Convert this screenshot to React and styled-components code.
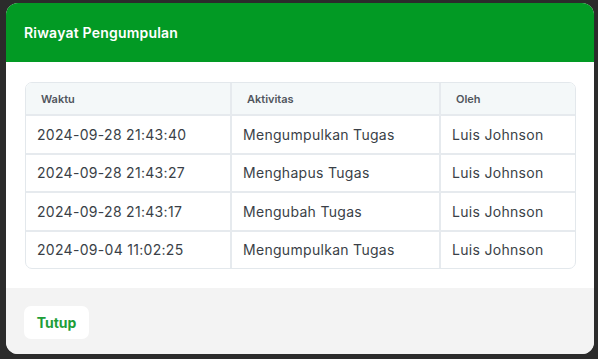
import React from "react";
import styled, { createGlobalStyle } from "styled-components";

const Global = createGlobalStyle`
  html, body {
    margin: 0;
    padding: 0;
    background: #2b2b2b;
    font-family: Inter, "Noto Sans", sans-serif;
  }
`;

const Backdrop = styled.div`
  width: 598px;
  height: 359px;
  padding: 3px 4px 5px 6px;
  box-sizing: border-box;
`;

const Modal = styled.div`
  height: 100%;
  border-radius: 12px;
  overflow: hidden;
  display: flex;
  flex-direction: column;
  background: #fff;
`;

const Header = styled.div`
  height: 59px;
  background: #029a24;
  display: flex;
  align-items: center;
  padding: 0 18px;
  color: #fff;
  font-size: 14px;
  font-weight: 600;
  letter-spacing: 0.2px;
`;

const Body = styled.div`
  padding: 20px 18px 19px 19px;
`;

const TableWrap = styled.div`
  border: 1px solid #e3e8ec;
  border-radius: 7px;
  overflow: hidden;
`;

const Table = styled.table`
  width: 100%;
  border-collapse: collapse;
  table-layout: fixed;
`;

const Th = styled.th`
  background: #f4f8f9;
  height: 31px;
  text-align: left;
  padding: 0 15px;
  font-size: 11px;
  font-weight: 600;
  color: #50555d;
  border-bottom: 1px solid #e3e8ec;
  border-left: ${({ $first }) => ($first ? "none" : "2px solid #e6eaee")};
`;

const Td = styled.td`
  height: 36.5px;
  padding: 0 11px;
  font-size: 14px;
  letter-spacing: 0.3px;
  color: #3a3f47;
  white-space: nowrap;
  border-top: 2px solid #e6eaee;
  border-left: ${({ $first }) => ($first ? "none" : "2px solid #e6eaee")};
`;

const Footer = styled.div`
  flex: 1;
  background: #f3f3f3;
  display: flex;
  align-items: center;
  padding: 0 18px;
`;

const Button = styled.button`
  background: #fff;
  border: none;
  border-radius: 7px;
  width: 65px;
  height: 33px;
  margin-top: 2px;
  font-family: Inter, "Noto Sans", sans-serif;
  font-size: 14px;
  font-weight: 700;
  color: #1e9e38;
`;

const rows = [
  ["2024-09-28 21:43:40", "Mengumpulkan Tugas", "Luis Johnson"],
  ["2024-09-28 21:43:27", "Menghapus Tugas", "Luis Johnson"],
  ["2024-09-28 21:43:17", "Mengubah Tugas", "Luis Johnson"],
  ["2024-09-04 11:02:25", "Mengumpulkan Tugas", "Luis Johnson"],
];

export default function App() {
  return (
    <>
      <Global />
      <Backdrop>
        <Modal>
          <Header>Riwayat Pengumpulan</Header>
          <Body>
            <TableWrap>
              <Table>
                <colgroup>
                  <col style={{ width: 205 }} />
                  <col style={{ width: 209 }} />
                  <col />
                </colgroup>
                <thead>
                  <tr>
                    <Th $first>Waktu</Th>
                    <Th>Aktivitas</Th>
                    <Th>Oleh</Th>
                  </tr>
                </thead>
                <tbody>
                  {rows.map((r, i) => (
                    <tr key={i}>
                      <Td $first>{r[0]}</Td>
                      <Td>{r[1]}</Td>
                      <Td>{r[2]}</Td>
                    </tr>
                  ))}
                </tbody>
              </Table>
            </TableWrap>
          </Body>
          <Footer>
            <Button>Tutup</Button>
          </Footer>
        </Modal>
      </Backdrop>
    </>
  );
}
